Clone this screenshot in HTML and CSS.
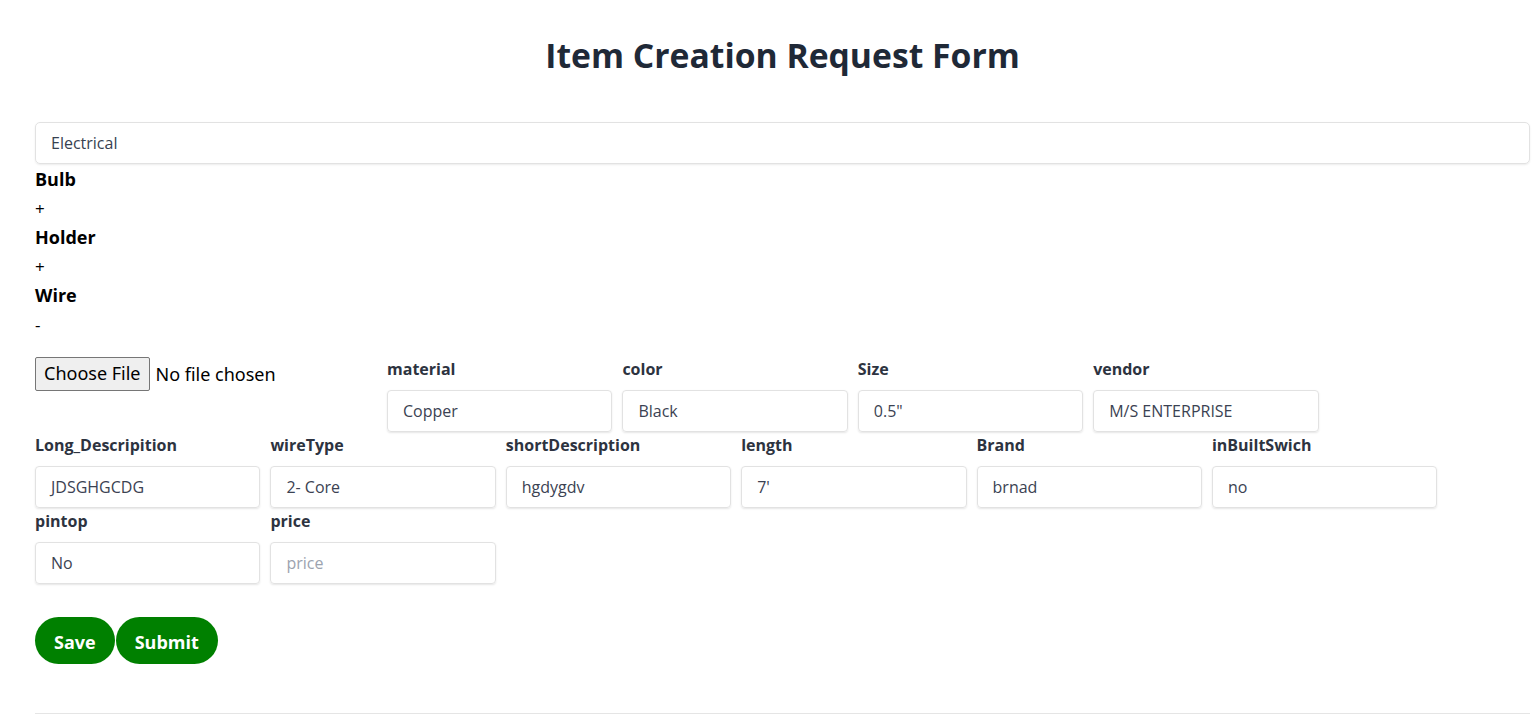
FILE: index.html
```html
<!DOCTYPE html>
<html lang="en">
<head>
<meta charset="utf-8">
<title>Item Creation Request Form</title>
<link rel="stylesheet" href="styles.css">
</head>
<body>
<div class="page">
  <h1 class="title">Item Creation Request Form</h1>
  <div class="select">Electrical</div>
  <div class="tree">
    <div class="node">Bulb</div>
    <div class="toggle">+</div>
    <div class="node">Holder</div>
    <div class="toggle">+</div>
    <div class="node">Wire</div>
    <div class="toggle">-</div>
  </div>
  <div class="fields">
    <div class="file-block">
      <span class="file-btn">Choose File</span><span class="file-name">No file chosen</span>
    </div>
    <div class="field"><label class="label">material</label><div class="input">Copper</div></div>
    <div class="field"><label class="label">color</label><div class="input">Black</div></div>
    <div class="field"><label class="label">Size</label><div class="input">0.5"</div></div>
    <div class="field"><label class="label">vendor</label><div class="input">M/S ENTERPRISE</div></div>
    <div class="field"><label class="label">Long_Descripition</label><div class="input">JDSGHGCDG</div></div>
    <div class="field"><label class="label">wireType</label><div class="input">2- Core</div></div>
    <div class="field"><label class="label">shortDescription</label><div class="input">hgdygdv</div></div>
    <div class="field"><label class="label">length</label><div class="input">7'</div></div>
    <div class="field"><label class="label">Brand</label><div class="input">brnad</div></div>
    <div class="field"><label class="label">inBuiltSwich</label><div class="input">no</div></div>
    <div class="field"><label class="label">pintop</label><div class="input">No</div></div>
    <div class="field"><label class="label">price</label><div class="input placeholder">price</div></div>
  </div>
  <div class="actions">
    <button class="btn">Save</button><button class="btn">Submit</button>
  </div>
  <hr class="rule">
</div>
</body>
</html>
```

FILE: styles.css
```css
* { box-sizing: border-box; }
html, body { margin: 0; padding: 0; background: #fff; }
body { font-family: "Open Sans", "Noto Sans", sans-serif; font-size: 16px; color: #000; }
.page { padding: 0 5px 0 35px; }
.title {
  margin: 0;
  padding-top: 31px;
  height: 122px;
  text-align: center;
  font-size: 33.7px;
  line-height: 48px;
  font-weight: 700;
  color: #1f2937;
}
.select {
  height: 42px;
  border: 1px solid #e2e2e2;
  border-radius: 5px;
  box-shadow: 0 1px 2px rgba(0,0,0,0.08);
  padding: 0 15px;
  line-height: 40px;
  color: #374151;
  font-size: 16px;
}
.tree { margin-top: 1px; margin-bottom: 18px; }
.node, .toggle { height: 29px; line-height: 29px; }
.node { font-weight: 700; font-size: 18px; }
.toggle { font-size: 17px; }
.fields {
  display: flex;
  flex-wrap: wrap;
  column-gap: 10px;
  width: 1495px;
}
.file-block {
  width: 342px;
  display: flex;
  align-items: flex-start;
  font-family: "Noto Sans", sans-serif;
  font-size: 18px;
}
.file-btn {
  display: inline-block;
  height: 34px;
  line-height: 31px;
  padding: 0 8px;
  border: 1px solid #767676;
  border-radius: 2px;
  background: #efefef;
  color: #000;
}
.file-name { margin-left: 6px; line-height: 35px; color: #000; }
.field { width: 225.4px; display: flex; flex-direction: column; }
.label {
  font-weight: 700;
  font-size: 16px;
  line-height: 24px;
  color: #2d3340;
  margin-bottom: 9px;
}
.input {
  height: 42px;
  border: 1px solid #e2e2e2;
  border-radius: 4px;
  box-shadow: 0 1px 2px rgba(0,0,0,0.1);
  padding: 0 15px;
  line-height: 40px;
  color: #3b4252;
  font-size: 16px;
  margin-bottom: 1px;
}
.placeholder { color: #9ca3af; }
.actions { margin-top: 32px; display: flex; gap: 1px; }
.btn {
  height: 47px;
  border: none;
  border-radius: 24px;
  background: #008000;
  color: #fff;
  font-family: "Open Sans", sans-serif;
  font-weight: 700;
  font-size: 18px;
  padding: 2px 19px 0;
}
.rule { margin: 49px 0 0; border: none; border-top: 1px solid #e5e5e5; }
```
